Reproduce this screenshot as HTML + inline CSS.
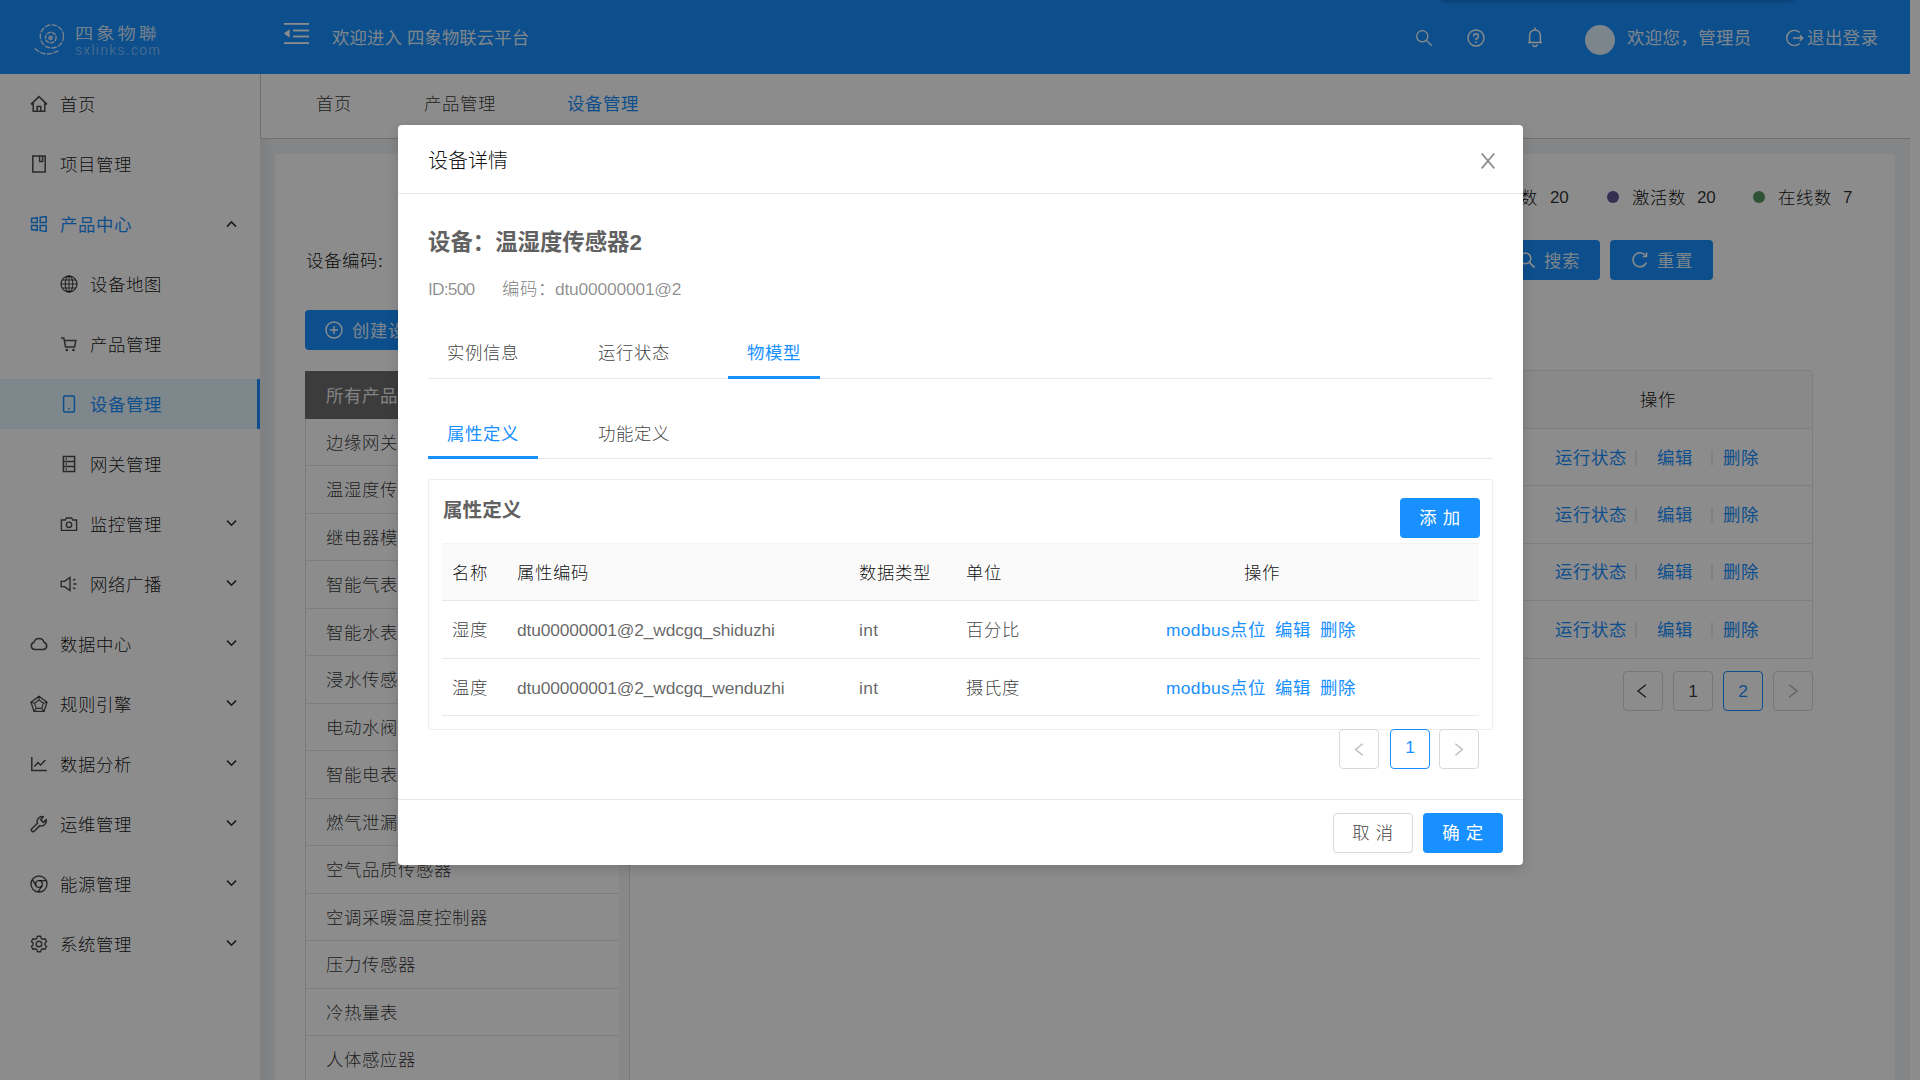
<!DOCTYPE html>
<html lang="zh-CN">
<head>
<meta charset="utf-8">
<title>四象物联云平台</title>
<style>
*{box-sizing:border-box;margin:0;padding:0}
html,body{width:1920px;height:1080px;overflow:hidden;background:#fff}
body{font-family:"Liberation Sans","Noto Sans CJK SC",sans-serif;font-size:17.4px;letter-spacing:.6px;color:rgba(0,0,0,.95);position:relative;font-weight:300}
svg{display:block}
#app{position:absolute;left:0;top:0;width:1910px;height:1080px;overflow:hidden;background:#fff}
/* header */
.hd{position:absolute;left:0;top:0;width:1910px;height:74px;background:#1890ff;color:rgba(255,255,255,.9);font-weight:400}
.hd .t{position:absolute;white-space:nowrap;line-height:24px}
/* sidebar */
.sb{position:absolute;left:0;top:74px;width:260px;height:1006px;background:#fff}
.mi{position:absolute;left:0;width:260px;height:50px;line-height:50px;font-size:17.4px;white-space:nowrap;color:rgba(0,0,0,.92)}
.mi .ic{position:absolute;top:16px;width:18px;height:18px;color:rgba(0,0,0,.7)}
.mi.act .ic,.mi.on .ic{color:#1890ff}
.mi .tx{position:absolute;top:1px}
.mi .ar{position:absolute;left:226px;top:19px;width:11px;height:10px}
.mi.on{background:#e6f7ff;color:#1890ff;font-weight:400}
.mi.on:after{content:"";position:absolute;right:0;top:0;width:3px;height:50px;background:#1890ff}
.mi.act{color:#1890ff;font-weight:400}
/* tabs bar */
.tb{position:absolute;left:260px;top:74px;width:1650px;height:65px;background:#fff;border-bottom:1px solid #cbcbcb;border-left:1px solid #cbcbcb}
.tb span{position:absolute;top:18px;color:rgba(0,0,0,.8);line-height:24px;font-size:17.4px;white-space:nowrap}
/* content */
.ct{position:absolute;left:260px;top:139px;width:1650px;height:941px;background:linear-gradient(90deg,rgba(0,0,0,.04),rgba(0,0,0,0) 16px),#f0f2f5}
.card{position:absolute;left:15px;top:15px;width:1620px;height:940px;background:#fff;border-radius:3px}
.abs{position:absolute;white-space:nowrap}
.btn{position:absolute;height:40px;border-radius:4px;background:#1890ff;color:rgba(255,255,255,.9);font-weight:400;font-size:17.4px;line-height:40px;white-space:nowrap}
/* product list */
.pl{position:absolute;left:30px;top:217px;width:314px;border-left:1px solid #e0e0e0}
.pl div{height:47.5px;line-height:51px;padding-left:20px;border-bottom:1px solid #e4e4e4;font-size:17.4px;color:rgba(0,0,0,.8);white-space:nowrap}
.pl div.h{background:#6d6d6d;color:rgba(255,255,255,.9);font-weight:400;border-bottom:0;line-height:50px;height:48px;margin-left:-1px;padding-left:21px}
/* device table (right part) */
.dt{position:absolute;left:700px;top:216px;width:838px;height:289px;border:1px solid #e4e4e4;border-radius:4px 4px 0 0;overflow:hidden}
.dt .r{position:absolute;left:0;width:100%;height:57.5px;border-bottom:1px solid #e8e8e8}
.dt .r.h{background:#fafafa}
.lk{color:#1890ff;font-weight:400}
.pg{position:absolute;width:40px;height:40px;border:1px solid #d9d9d9;border-radius:4px;background:#fff;text-align:center;line-height:38px;font-size:17.4px}
.pg.on{border-color:#1890ff;color:#1890ff}
/* mask */
.mask{position:absolute;left:0;top:0;width:1920px;height:1080px;background:rgba(0,0,0,.45)}
/* modal */
.md{position:absolute;left:398px;top:125px;width:1125px;height:740px;background:#fff;border-radius:4px;box-shadow:0 4px 12px rgba(0,0,0,.15);color:rgba(0,0,0,.78)}
.md .ln{position:absolute;height:1px;background:#e8e8e8}
.md .tab{position:absolute;font-size:17.4px;line-height:24px;white-space:nowrap}
.md .ink{position:absolute;height:3px;background:#1890ff}
.mt{position:absolute;left:44px;top:418px;width:1037px}
.mt .r{position:absolute;left:0;width:1037px;border-bottom:1px solid #e8e8e8}
.mt .r span{position:absolute;white-space:nowrap;line-height:24px}
.b2{position:absolute;width:80px;height:40px;border-radius:4px;font-size:17.4px;line-height:40px;text-align:center;white-space:nowrap}
</style>
</head>
<body>
<div id="app">
  <!-- HEADER -->
  <div class="hd" id="hd">
    <!-- logo -->
    <svg style="position:absolute;left:30px;top:20px;opacity:.88" width="40" height="40" viewBox="30 20 40 40" fill="none" stroke="#fff" stroke-width="1.35" stroke-linecap="round">
      <circle cx="51.9" cy="36.4" r="11.6" stroke-dasharray="4.4 2.4"/>
      <path d="M35.2 48.8 Q46 58.6 59.4 50" stroke-dasharray="4.4 2.4"/>
      <circle cx="50.8" cy="37.6" r="5.3" stroke-dasharray="3.2 2" stroke-width="1.4"/>
      <circle cx="50.6" cy="38" r="2.4" fill="#fff" stroke="none" opacity=".85"/>
    </svg>
    <div class="t" style="left:75px;top:22px;font-size:15.4px;letter-spacing:2.6px;color:rgba(255,255,255,.82);transform:scaleX(1.18);transform-origin:0 0">四象物聯</div>
    <div class="t" style="left:75px;top:38px;font-size:14px;letter-spacing:1.25px;color:rgba(255,255,255,.42)">sxlinks.com</div>
    <!-- fold icon -->
    <svg style="position:absolute;left:284px;top:23px" width="25" height="21" viewBox="0 0 25 21" fill="#fff">
      <rect x="0" y="0" width="25" height="1.8"/><rect x="9" y="6.6" width="16" height="1.8"/><rect x="9" y="12.6" width="16" height="1.8"/><rect x="0" y="19.2" width="25" height="1.8"/>
      <path d="M0 10.5 L5.6 6.2 V14.8 Z"/>
    </svg>
    <div class="t" style="left:332px;top:26px;font-size:17.4px;letter-spacing:.1px">欢迎进入 四象物联云平台</div>
    <!-- search -->
    <svg style="position:absolute;left:1415px;top:29px" width="18" height="18" viewBox="0 0 18 18" fill="none" stroke="#fff" stroke-width="1.3"><circle cx="7.3" cy="7.3" r="5.6"/><path d="M11.4 11.4 L16.8 16.8"/></svg>
    <!-- help -->
    <svg style="position:absolute;left:1467px;top:29px" width="18" height="18" viewBox="0 0 18 18" fill="none" stroke="#fff" stroke-width="1.4"><circle cx="9" cy="9" r="8"/><path d="M6.6 7.2 A2.4 2.4 0 1 1 9 9.6 V11" stroke-width="1.4"/><circle cx="9" cy="13.2" r=".9" fill="#fff" stroke="none"/></svg>
    <!-- bell -->
    <svg style="position:absolute;left:1526px;top:26px" width="18" height="22" viewBox="0 0 18 22" fill="none" stroke="#fff" stroke-width="1.5"><path d="M2 16.5 H16 M3.6 16.5 V9.4 A5.4 5.4 0 0 1 14.4 9.4 V16.5"/><path d="M9 4 V2" stroke-linecap="round"/><path d="M7 18.6 A2 2 0 0 0 11 18.6"/></svg>
    <div style="position:absolute;left:1585px;top:25px;width:30px;height:30px;border-radius:50%;background:#e2f2ff"></div>
    <div class="t" style="left:1627px;top:26px;font-size:17.4px;letter-spacing:.4px">欢迎您，管理员</div>
    <!-- logout -->
    <svg style="position:absolute;left:1785px;top:29px" width="19" height="18" viewBox="0 0 19 18" fill="none" stroke="#fff" stroke-width="1.4"><path d="M14.6 3.6 A7.6 7.6 0 1 0 14.6 14.4"/><path d="M8 9 H17.5 M14.8 6.2 L17.8 9 L14.8 11.8"/></svg>
    <div class="t" style="left:1807px;top:26px;font-size:17.4px;letter-spacing:.5px">退出登录</div>
  </div>
  <!-- SIDEBAR -->
  <div class="sb" id="sb">
    <div class="mi" style="top:5px"><svg class="ic" style="left:30px" viewBox="0 0 18 18" fill="none" stroke="currentColor" stroke-width="1.5"><path d="M1 9.4 L9 1.6 L17 9.4 M3.2 7.6 V16.2 H14.8 V7.6 M7.2 16.2 V11.4 H10.8 V16.2"/></svg><span class="tx" style="left:60px">首页</span></div>
    <div class="mi" style="top:65px"><svg class="ic" style="left:30px" viewBox="0 0 18 18" fill="none" stroke="currentColor" stroke-width="1.5"><path d="M2.8 1 H15.2 V17 H2.8 Z M9.6 1 V6.6 H12.6 V1"/></svg><span class="tx" style="left:60px">项目管理</span></div>
    <div class="mi act" style="top:125px"><svg class="ic" style="left:30px" viewBox="0 0 18 18" fill="none" stroke="currentColor" stroke-width="1.5"><path d="M1.6 3.4 L7.2 2.7 V7.6 H1.6 Z M10.2 2.3 L16.2 1.6 V7.6 H10.2 Z M1.6 10.4 H7.2 V15.3 L1.6 14.6 Z M10.2 10.4 H16.2 V16.4 L10.2 15.7 Z"/></svg><span class="tx" style="left:60px">产品中心</span><svg class="ar" style="top:20px" viewBox="0 0 11 10" fill="none" stroke="rgba(0,0,0,.8)" stroke-width="1.6"><path d="M1 7.6 L5.5 3 L10 7.6"/></svg></div>
    <div class="mi" style="top:185px"><svg class="ic" style="left:60px" viewBox="0 0 18 18" fill="none" stroke="currentColor" stroke-width="1.05"><circle cx="9" cy="9" r="8" stroke-width="1.3"/><ellipse cx="9" cy="9" rx="3.8" ry="8"/><path d="M9 1 V17 M1 9 H17 M2.2 5 H15.8 M2.2 13 H15.8"/></svg><span class="tx" style="left:90px">设备地图</span></div>
    <div class="mi" style="top:245px"><svg class="ic" style="left:60px" viewBox="0 0 18 18" fill="none" stroke="currentColor" stroke-width="1.5"><path d="M1 3 H3.8 L5.6 12 H14.6 L15.8 5.6 H4.4"/><circle cx="6.8" cy="15" r="1.3" fill="currentColor" stroke="none"/><circle cx="13.4" cy="15" r="1.3" fill="currentColor" stroke="none"/></svg><span class="tx" style="left:90px">产品管理</span></div>
    <div class="mi on" style="top:305px"><svg class="ic" style="left:60px" viewBox="0 0 18 18" fill="none" stroke="currentColor" stroke-width="1.5"><rect x="3.6" y="1" width="10.8" height="16" rx="1.2"/><circle cx="9" cy="13.6" r=".9" fill="currentColor" stroke="none"/></svg><span class="tx" style="left:90px">设备管理</span></div>
    <div class="mi" style="top:365px"><svg class="ic" style="left:60px" viewBox="0 0 18 18" fill="none" stroke="currentColor" stroke-width="1.5"><path d="M3.4 1.4 H14.6 V16.6 H3.4 Z M3.4 6.4 H14.6 M3.4 11.6 H14.6"/><path d="M5.6 4 H7 M5.6 9 H7 M5.6 14 H7" stroke-width="1.3"/></svg><span class="tx" style="left:90px">网关管理</span></div>
    <div class="mi" style="top:425px"><svg class="ic" style="left:60px" viewBox="0 0 18 18" fill="none" stroke="currentColor" stroke-width="1.4"><path d="M1.4 5 H5.2 L6.4 3 H11.6 L12.8 5 H16.6 V15.4 H1.4 Z"/><circle cx="9" cy="9.8" r="2.7"/></svg><span class="tx" style="left:90px">监控管理</span><svg class="ar" viewBox="0 0 11 10" fill="none" stroke="rgba(0,0,0,.8)" stroke-width="1.6"><path d="M1 2.6 L5.5 7.2 L10 2.6"/></svg></div>
    <div class="mi" style="top:485px"><svg class="ic" style="left:60px" viewBox="0 0 18 18" fill="none" stroke="currentColor" stroke-width="1.4"><path d="M1.2 6.4 H4.6 L10 2.4 V15.6 L4.6 11.6 H1.2 Z"/><path d="M13.4 9 H16.6 M13 5.4 L15.4 4.2 M13 12.6 L15.4 13.8" stroke-width="1.5"/></svg><span class="tx" style="left:90px">网络广播</span><svg class="ar" viewBox="0 0 11 10" fill="none" stroke="rgba(0,0,0,.8)" stroke-width="1.6"><path d="M1 2.6 L5.5 7.2 L10 2.6"/></svg></div>
    <div class="mi" style="top:545px"><svg class="ic" style="left:30px" viewBox="0 0 18 18" fill="none" stroke="currentColor" stroke-width="1.5"><path d="M4.6 14.6 A3.8 3.8 0 0 1 4 7.2 A5.2 5.2 0 0 1 14 7.2 A3.8 3.8 0 0 1 13.4 14.6 Z"/></svg><span class="tx" style="left:60px">数据中心</span><svg class="ar" viewBox="0 0 11 10" fill="none" stroke="rgba(0,0,0,.8)" stroke-width="1.6"><path d="M1 2.6 L5.5 7.2 L10 2.6"/></svg></div>
    <div class="mi" style="top:605px"><svg class="ic" style="left:30px" viewBox="0 0 18 18" fill="none" stroke="currentColor" stroke-width="1.3"><path d="M9 1.4 L17 7.2 L14 16.4 H4 L1 7.2 Z"/><path d="M9 5 L13.4 8.2 L11.8 13.4 H6.2 L4.6 8.2 Z M9 1.4 V5 M17 7.2 L13.4 8.2 M14 16.4 L11.8 13.4 M4 16.4 L6.2 13.4 M1 7.2 L4.6 8.2" stroke-width="1.1"/></svg><span class="tx" style="left:60px">规则引擎</span><svg class="ar" viewBox="0 0 11 10" fill="none" stroke="rgba(0,0,0,.8)" stroke-width="1.6"><path d="M1 2.6 L5.5 7.2 L10 2.6"/></svg></div>
    <div class="mi" style="top:665px"><svg class="ic" style="left:30px" viewBox="0 0 18 18" fill="none" stroke="currentColor" stroke-width="1.5"><path d="M1.8 2 V15.6 H16.8"/><path d="M4.4 11.6 L8 7.6 L10.6 10 L15.4 5"/></svg><span class="tx" style="left:60px">数据分析</span><svg class="ar" viewBox="0 0 11 10" fill="none" stroke="rgba(0,0,0,.8)" stroke-width="1.6"><path d="M1 2.6 L5.5 7.2 L10 2.6"/></svg></div>
    <div class="mi" style="top:725px"><svg class="ic" style="left:30px" viewBox="0 0 18 18" fill="none" stroke="currentColor" stroke-width="1.5"><path d="M16.2 4.6 L13.4 7.4 L10.6 4.6 L13.4 1.8 A5 5 0 0 0 7.4 8.2 L1.8 13.8 A1.7 1.7 0 0 0 4.2 16.2 L9.8 10.6 A5 5 0 0 0 16.2 4.6 Z" stroke-linejoin="round"/></svg><span class="tx" style="left:60px">运维管理</span><svg class="ar" viewBox="0 0 11 10" fill="none" stroke="rgba(0,0,0,.8)" stroke-width="1.6"><path d="M1 2.6 L5.5 7.2 L10 2.6"/></svg></div>
    <div class="mi" style="top:785px"><svg class="ic" style="left:30px" viewBox="0 0 18 18" fill="none" stroke="currentColor" stroke-width="1.4"><circle cx="9" cy="9" r="8"/><circle cx="9" cy="9" r="3.4"/><path d="M9 5.6 H16.2 M6 10.6 L2.4 4.6 M12 10.6 L8.2 16.8"/></svg><span class="tx" style="left:60px">能源管理</span><svg class="ar" viewBox="0 0 11 10" fill="none" stroke="rgba(0,0,0,.8)" stroke-width="1.6"><path d="M1 2.6 L5.5 7.2 L10 2.6"/></svg></div>
    <div class="mi" style="top:845px"><svg class="ic" style="left:30px" viewBox="0 0 18 18" fill="none" stroke="currentColor" stroke-width="1.4"><circle cx="9" cy="9" r="2.8"/><path d="M7.4 1.2 H10.6 L11.2 3.4 L12.8 4.3 L15 3.7 L16.6 6.5 L15 8.1 V9.9 L16.6 11.5 L15 14.3 L12.8 13.7 L11.2 14.6 L10.6 16.8 H7.4 L6.8 14.6 L5.2 13.7 L3 14.3 L1.4 11.5 L3 9.9 V8.1 L1.4 6.5 L3 3.7 L5.2 4.3 L6.8 3.4 Z" stroke-linejoin="round"/></svg><span class="tx" style="left:60px">系统管理</span><svg class="ar" viewBox="0 0 11 10" fill="none" stroke="rgba(0,0,0,.8)" stroke-width="1.6"><path d="M1 2.6 L5.5 7.2 L10 2.6"/></svg></div>
  </div>
  <!-- TABS BAR -->
  <div class="tb" id="tb">
    <span style="left:55px">首页</span><span style="left:163px">产品管理</span><span style="left:306px;color:#1890ff;font-weight:400">设备管理</span>
  </div>
  <!-- CONTENT -->
  <div class="ct" id="ct">
    <div class="card">
      <!-- stats (coords relative to card origin 275,154) -->
      <div style="position:absolute;left:1166px;top:37px;width:12px;height:12px;border-radius:50%;background:#f5a623"></div>
      <div class="abs" style="left:1191px;top:32px;line-height:24px">设备总数</div><div class="abs" style="left:1275px;top:32px;line-height:24px;font-size:17px;letter-spacing:-.3px;color:rgba(0,0,0,.82)">20</div>
      <div style="position:absolute;left:1332px;top:37px;width:12px;height:12px;border-radius:50%;background:#605493"></div>
      <div class="abs" style="left:1357px;top:32px;line-height:24px">激活数</div><div class="abs" style="left:1422px;top:32px;line-height:24px;font-size:17px;letter-spacing:-.3px;color:rgba(0,0,0,.82)">20</div>
      <div style="position:absolute;left:1478px;top:37px;width:12px;height:12px;border-radius:50%;background:#55975f"></div>
      <div class="abs" style="left:1503px;top:32px;line-height:24px">在线数</div><div class="abs" style="left:1568px;top:32px;line-height:24px;font-size:17px;color:rgba(0,0,0,.82)">7</div>
      <!-- search row -->
      <div class="abs" style="left:31px;top:95px;line-height:24px">设备编码:</div>
      <div class="btn" style="left:1223px;top:86px;width:102px"><svg style="position:absolute;left:20px;top:11px" width="18" height="18" viewBox="0 0 18 18" fill="none" stroke="#fff" stroke-width="1.6"><circle cx="7.4" cy="7.4" r="5.4"/><path d="M11.4 11.4 L16.6 16.6"/></svg><span style="position:absolute;left:46px;top:1px">搜索</span></div>
      <div class="btn" style="left:1335px;top:86px;width:103px"><svg style="position:absolute;left:21px;top:11px" width="18" height="18" viewBox="0 0 18 18" fill="none" stroke="#fff" stroke-width="1.5"><path d="M15.4 11.6 A7 7 0 1 1 14.6 4.6"/><path d="M15.6 1.6 V5.4 H11.8" stroke-linejoin="round"/></svg><span style="position:absolute;left:47px;top:1px">重置</span></div>
      <!-- create -->
      <div class="btn" style="left:30px;top:156px;width:140px"><svg style="position:absolute;left:20px;top:11px" width="18" height="18" viewBox="0 0 18 18" fill="none" stroke="#fff" stroke-width="1.4"><circle cx="9" cy="9" r="8"/><path d="M9 5 V13 M5 9 H13"/></svg><span style="position:absolute;left:47px;top:1px">创建设备</span></div>
      <!-- product list -->
      <div class="pl">
        <div class="h">所有产品</div><div style="height:47px;line-height:49px">边缘网关</div><div style="height:48px;line-height:48px">温湿度传感器</div><div style="height:47px;line-height:49px">继电器模块</div><div style="height:48px;line-height:48px">智能气表</div><div style="height:47px;line-height:49px">智能水表</div><div style="height:48px;line-height:48px">浸水传感器</div><div style="height:47px;line-height:49px">电动水阀</div><div style="height:48px;line-height:48px">智能电表</div><div style="height:47px;line-height:49px">燃气泄漏报警器</div><div style="height:48px;line-height:48px">空气品质传感器</div><div style="height:47px;line-height:49px">空调采暖温度控制器</div><div style="height:48px;line-height:48px">压力传感器</div><div style="height:47px;line-height:49px">冷热量表</div><div style="height:48px;line-height:48px">人体感应器</div><div style="height:47px;line-height:49px">烟雾报警器</div>
      </div>
      <div style="position:absolute;left:344px;top:217px;width:11px;height:800px;background:#f8f8f8;border-right:1px solid #dcdcdc"></div>
      <!-- device table -->
      <div class="dt" style="left:376px;width:1162px">
        <div class="r h" style="top:0"><span class="abs" style="left:1006px;top:17px;line-height:24px;transform:translateX(-50%)">操作</span></div>
        <div class="r" style="top:57.5px"></div><div class="r" style="top:115px"></div><div class="r" style="top:172.5px"></div><div class="r" style="top:230px;border-bottom:0"></div>
      </div>
      <div class="abs lk" style="left:1280px;top:292px;line-height:24px">运行状态</div><div style="position:absolute;left:1360px;top:296px;width:2px;height:16px;background:#ebebeb"></div><div class="abs lk" style="left:1382px;top:292px;line-height:24px">编辑</div><div style="position:absolute;left:1436px;top:296px;width:2px;height:16px;background:#ebebeb"></div><div class="abs lk" style="left:1448px;top:292px;line-height:24px">删除</div>
      <div class="abs lk" style="left:1280px;top:349px;line-height:24px">运行状态</div><div style="position:absolute;left:1360px;top:353px;width:2px;height:16px;background:#ebebeb"></div><div class="abs lk" style="left:1382px;top:349px;line-height:24px">编辑</div><div style="position:absolute;left:1436px;top:353px;width:2px;height:16px;background:#ebebeb"></div><div class="abs lk" style="left:1448px;top:349px;line-height:24px">删除</div>
      <div class="abs lk" style="left:1280px;top:406px;line-height:24px">运行状态</div><div style="position:absolute;left:1360px;top:410px;width:2px;height:16px;background:#ebebeb"></div><div class="abs lk" style="left:1382px;top:406px;line-height:24px">编辑</div><div style="position:absolute;left:1436px;top:410px;width:2px;height:16px;background:#ebebeb"></div><div class="abs lk" style="left:1448px;top:406px;line-height:24px">删除</div>
      <div class="abs lk" style="left:1280px;top:464px;line-height:24px">运行状态</div><div style="position:absolute;left:1360px;top:468px;width:2px;height:16px;background:#ebebeb"></div><div class="abs lk" style="left:1382px;top:464px;line-height:24px">编辑</div><div style="position:absolute;left:1436px;top:468px;width:2px;height:16px;background:#ebebeb"></div><div class="abs lk" style="left:1448px;top:464px;line-height:24px">删除</div>
      <!-- pagination -->
      <div class="pg" style="left:1348px;top:517px"><svg style="margin:12px 0 0 12px" width="12" height="14" viewBox="0 0 12 14" fill="none" stroke="rgba(0,0,0,.8)" stroke-width="1.4"><path d="M9.8 .8 L2 7 L9.8 13.2"/></svg></div>
      <div class="pg" style="left:1398px;top:517px;color:rgba(0,0,0,.78);font-weight:400;letter-spacing:0">1</div>
      <div class="pg on" style="left:1448px;top:517px;letter-spacing:0">2</div>
      <div class="pg" style="left:1498px;top:517px"><svg style="margin:12px 0 0 13px" width="12" height="14" viewBox="0 0 12 14" fill="none" stroke="rgba(0,0,0,.3)" stroke-width="1.4"><path d="M2.2 .8 L10 7 L2.2 13.2"/></svg></div>
    </div>
  </div>
</div>
<div class="mask"></div>
<div style="position:absolute;left:1440px;top:-24px;width:354px;height:24px;background:#fff;border-radius:4px;box-shadow:0 1px 4px rgba(0,0,0,.28)"></div>
<div class="md" id="md">
  <div class="abs" style="left:30px;top:22px;font-size:20px;letter-spacing:0;line-height:28px;color:rgba(0,0,0,.95)">设备详情</div>
  <svg style="position:absolute;left:1083px;top:28px" width="14" height="16" viewBox="0 0 14 16" fill="none" stroke="rgba(0,0,0,.45)" stroke-width="1.7"><path d="M.7 .4 L13.3 15.4 M13.3 .4 L.7 15.4"/></svg>
  <div class="ln" style="left:0;top:68px;width:1125px"></div>
  <div class="abs" style="left:30px;top:102px;font-size:22.4px;letter-spacing:0;line-height:32px;font-weight:bold;color:#616161">设备：温湿度传感器2</div>
  <div class="abs" style="left:30px;top:152px;line-height:24px;color:rgba(0,0,0,.45);letter-spacing:-.8px">ID:500</div>
  <div class="abs" style="left:104px;top:152px;line-height:24px;color:rgba(0,0,0,.54)">编码：</div><div class="abs" style="left:157px;top:152px;line-height:24px;color:rgba(0,0,0,.45);letter-spacing:-.2px">dtu00000001@2</div>
  <!-- tabs 1 -->
  <div class="tab" style="left:49px;top:216px">实例信息</div>
  <div class="tab" style="left:200px;top:216px">运行状态</div>
  <div class="tab" style="left:349px;top:216px;color:#1890ff;font-weight:400">物模型</div>
  <div class="ln" style="left:30px;top:253px;width:1065px"></div>
  <div class="ink" style="left:330px;top:251px;width:92px"></div>
  <!-- tabs 2 -->
  <div class="tab" style="left:49px;top:297px;color:#1890ff;font-weight:400">属性定义</div>
  <div class="tab" style="left:200px;top:297px">功能定义</div>
  <div class="ln" style="left:30px;top:333px;width:1065px"></div>
  <div class="ink" style="left:30px;top:331px;width:110px"></div>
  <!-- card -->
  <div style="position:absolute;left:30px;top:354px;width:1065px;height:251px;border:1px solid #f2ecec;border-radius:2px"></div>
  <div class="abs" style="left:45px;top:371px;font-size:19.6px;letter-spacing:0;line-height:28px;font-weight:bold;color:#616161">属性定义</div>
  <div class="b2" style="left:1002px;top:373px;background:#1890ff;color:#fff;font-weight:400;line-height:40px">添 加</div>
  <!-- table -->
  <div class="mt">
    <div class="r" style="top:0;height:58px;background:#fafafa;color:rgba(0,0,0,.95);border-top:1px solid #f3f3f3"><span style="left:10px;top:17px">名称</span><span style="left:75px;top:17px">属性编码</span><span style="left:417px;top:17px">数据类型</span><span style="left:524px;top:17px">单位</span><span style="left:802px;top:17px">操作</span></div>
    <div class="r" style="top:58px;height:58px"><span style="left:10px;top:17px">湿度</span><span style="left:75px;top:17px;letter-spacing:-.16px;color:rgba(0,0,0,.62)">dtu00000001@2_wdcgq_shiduzhi</span><span style="left:417px;top:17px;letter-spacing:.4px;color:rgba(0,0,0,.62)">int</span><span style="left:524px;top:17px">百分比</span><span class="lk" style="left:724px;top:17px"><i style="font-style:normal;letter-spacing:.35px">modbus</i>点位</span><span class="lk" style="left:833px;top:17px">编辑</span><span class="lk" style="left:878px;top:17px">删除</span></div>
    <div class="r" style="top:116px;height:57px"><span style="left:10px;top:17px">温度</span><span style="left:75px;top:17px;letter-spacing:-.16px;color:rgba(0,0,0,.62)">dtu00000001@2_wdcgq_wenduzhi</span><span style="left:417px;top:17px;letter-spacing:.4px;color:rgba(0,0,0,.62)">int</span><span style="left:524px;top:17px">摄氏度</span><span class="lk" style="left:724px;top:17px"><i style="font-style:normal;letter-spacing:.35px">modbus</i>点位</span><span class="lk" style="left:833px;top:17px">编辑</span><span class="lk" style="left:878px;top:17px">删除</span></div>
  </div>
  <!-- pagination -->
  <div class="pg" style="left:941px;top:604px;border-color:#d9d9d9"><svg style="margin:13px auto 0" width="10" height="13" viewBox="0 0 10 13" fill="none" stroke="rgba(0,0,0,.28)" stroke-width="1.3"><path d="M8.6 .7 L1.6 6.5 L8.6 12.3"/></svg></div>
  <div class="pg on" style="left:992px;top:604px;line-height:34px;letter-spacing:0">1</div>
  <div class="pg" style="left:1041px;top:604px"><svg style="margin:13px auto 0" width="10" height="13" viewBox="0 0 10 13" fill="none" stroke="rgba(0,0,0,.28)" stroke-width="1.3"><path d="M1.4 .7 L8.4 6.5 L1.4 12.3"/></svg></div>
  <!-- footer -->
  <div class="ln" style="left:0;top:674px;width:1125px"></div>
  <div class="b2" style="left:935px;top:688px;border:1px solid #d9d9d9;background:#fff;color:rgba(0,0,0,.78);line-height:38px;box-shadow:0 2px 0 rgba(0,0,0,.015)">取 消</div>
  <div class="b2" style="left:1025px;top:688px;background:#1890ff;color:#fff;font-weight:400;line-height:40px">确 定</div>
  </div>
</body>
</html>
